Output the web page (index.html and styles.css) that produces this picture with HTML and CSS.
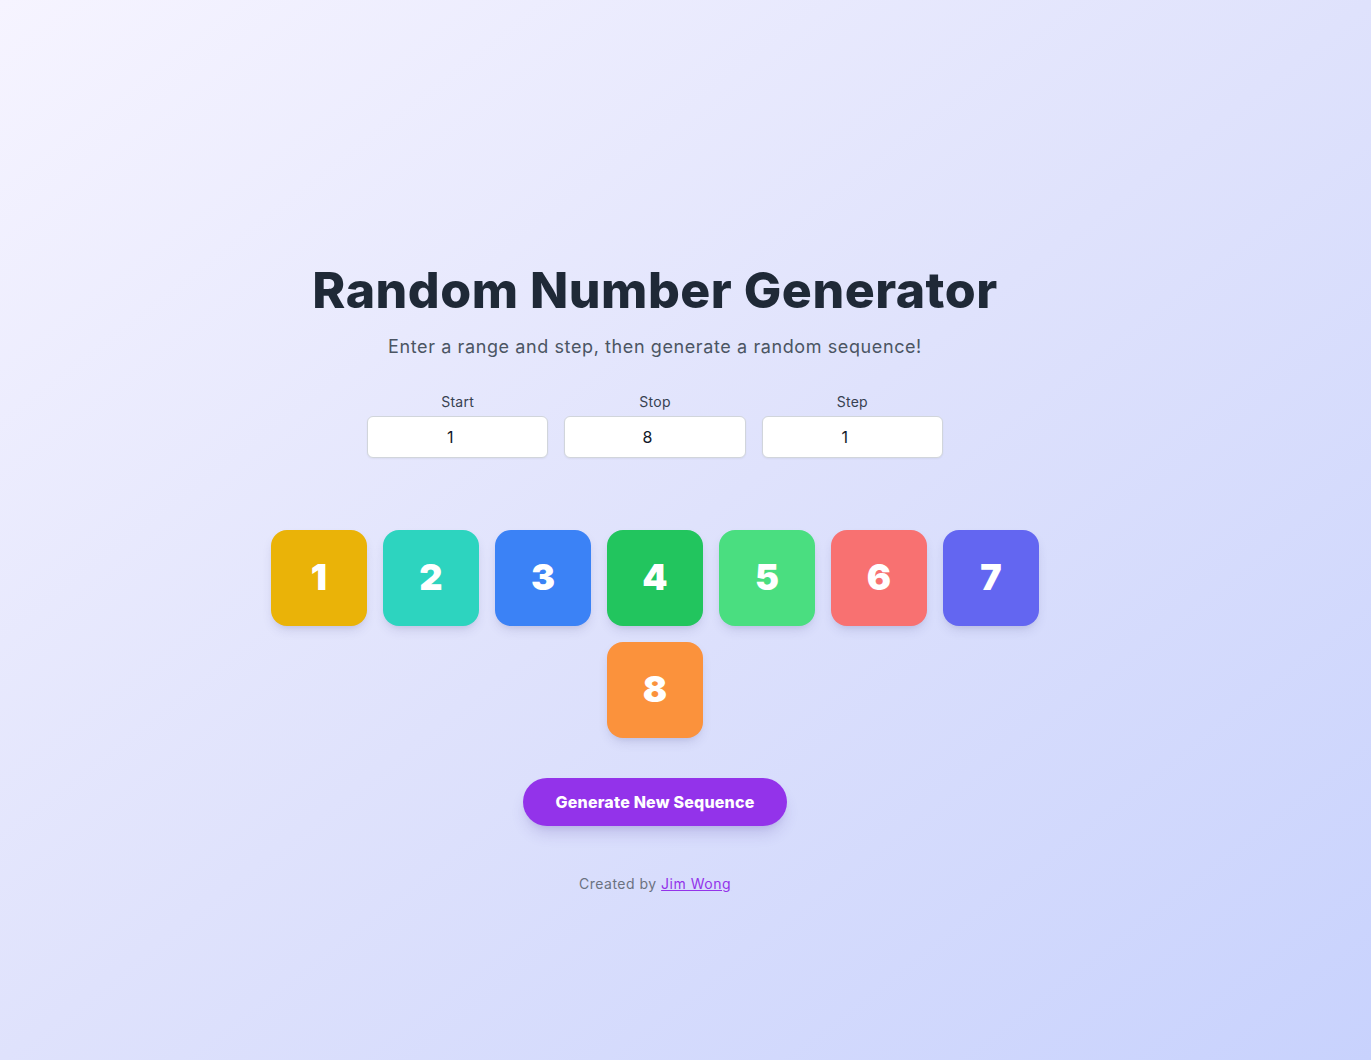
FILE: index.html
```html
<!DOCTYPE html>
<html lang="en">
<head>
<meta charset="utf-8">
<title>Random Number Generator</title>
<link rel="stylesheet" href="styles.css">
</head>
<body>
<main class="page">
  <h1 class="title">Random Number Generator</h1>
  <p class="subtitle">Enter a range and step, then generate a random sequence!</p>
  <div class="fields">
    <label class="field"><span class="field-label">Start</span><input class="field-input" type="number" value="1"></label>
    <label class="field"><span class="field-label">Stop</span><input class="field-input" type="number" value="8"></label>
    <label class="field"><span class="field-label">Step</span><input class="field-input" type="number" value="1"></label>
  </div>
  <div class="tiles">
    <div class="tile c1">1</div>
    <div class="tile c2">2</div>
    <div class="tile c3">3</div>
    <div class="tile c4">4</div>
    <div class="tile c5">5</div>
    <div class="tile c6">6</div>
    <div class="tile c7">7</div>
    <div class="tile c8">8</div>
  </div>
  <button class="generate" type="button">Generate New Sequence</button>
  <p class="footer">Created by <a href="#" class="footer-link">Jim Wong</a></p>
</main>
</body>
</html>
```
FILE: styles.css
```css
* { box-sizing: border-box; }
html, body { margin: 0; padding: 0; }
body {
  min-height: 1060px;
  background: linear-gradient(to bottom right, #f6f4ff 0%, #dfe2fc 50%, #c8d2fd 100%);
  font-family: Inter, "Noto Sans", sans-serif;
  color: #1f2937;
}
.page {
  width: 1310px;
  display: flex;
  flex-direction: column;
  align-items: center;
  padding-top: 266px;
}
.title {
  margin: 0;
  font-size: 50px;
  line-height: 48px;
  font-weight: 800;
  color: #1f2937;
  letter-spacing: 0.5px;
}
.subtitle {
  margin: 19px 0 0;
  font-size: 18px;
  line-height: 28px;
  color: #4b5563;
  letter-spacing: 0.6px;
}
.fields {
  margin-top: 31px;
  width: 576px;
  display: grid;
  grid-template-columns: repeat(3, 1fr);
  gap: 16px;
}
.field {
  display: flex;
  flex-direction: column;
  align-items: stretch;
  gap: 4px;
}
.field-label {
  text-align: center;
  font-size: 14px;
  line-height: 20px;
  color: #374151;
  letter-spacing: 0.3px;
}
.field-input {
  height: 42px;
  width: 100%;
  border: 1px solid #d1d5db;
  border-radius: 6px;
  background: #fff;
  box-shadow: 0 1px 2px rgba(0,0,0,0.05);
  text-align: center;
  font-family: inherit;
  font-size: 16px;
  color: #111827;
  padding: 0 27px 0 12px;
  -moz-appearance: textfield;
}
.field-input::-webkit-inner-spin-button,
.field-input::-webkit-outer-spin-button {
  -webkit-appearance: none;
  margin: 0;
}
.tiles {
  margin-top: 72px;
  width: 768px;
  display: flex;
  flex-wrap: wrap;
  justify-content: center;
  gap: 16px;
}
.tile {
  width: 96px;
  height: 96px;
  border-radius: 16px;
  display: flex;
  align-items: center;
  justify-content: center;
  color: #fff;
  font-size: 36px;
  font-weight: 900;
  padding-bottom: 2px;
  box-shadow: 0 6px 12px -3px rgba(60, 60, 120, 0.18), 0 3px 6px -4px rgba(60,60,120,0.12);
}
.c1 { background: #eab308; }
.c2 { background: #2dd4bf; }
.c3 { background: #3b82f6; }
.c4 { background: #22c55e; }
.c5 { background: #4ade80; }
.c6 { background: #f87171; }
.c7 { background: #6366f1; }
.c8 { background: #fb923c; }
.generate {
  margin-top: 40px;
  height: 48px;
  width: 264px;
  border: none;
  border-radius: 9999px;
  background: #9333ea;
  color: #fff;
  font-family: inherit;
  font-size: 16px;
  font-weight: 800;
  letter-spacing: 0.2px;
  box-shadow: 0 10px 15px -3px rgba(80, 60, 160, 0.2), 0 4px 6px -4px rgba(80,60,160,0.15);
}
.footer {
  margin: 48px 0 0;
  font-size: 14px;
  line-height: 20px;
  color: #6b7280;
  letter-spacing: 0.5px;
}
.footer-link {
  color: #9333ea;
  text-decoration: underline;
}
```
